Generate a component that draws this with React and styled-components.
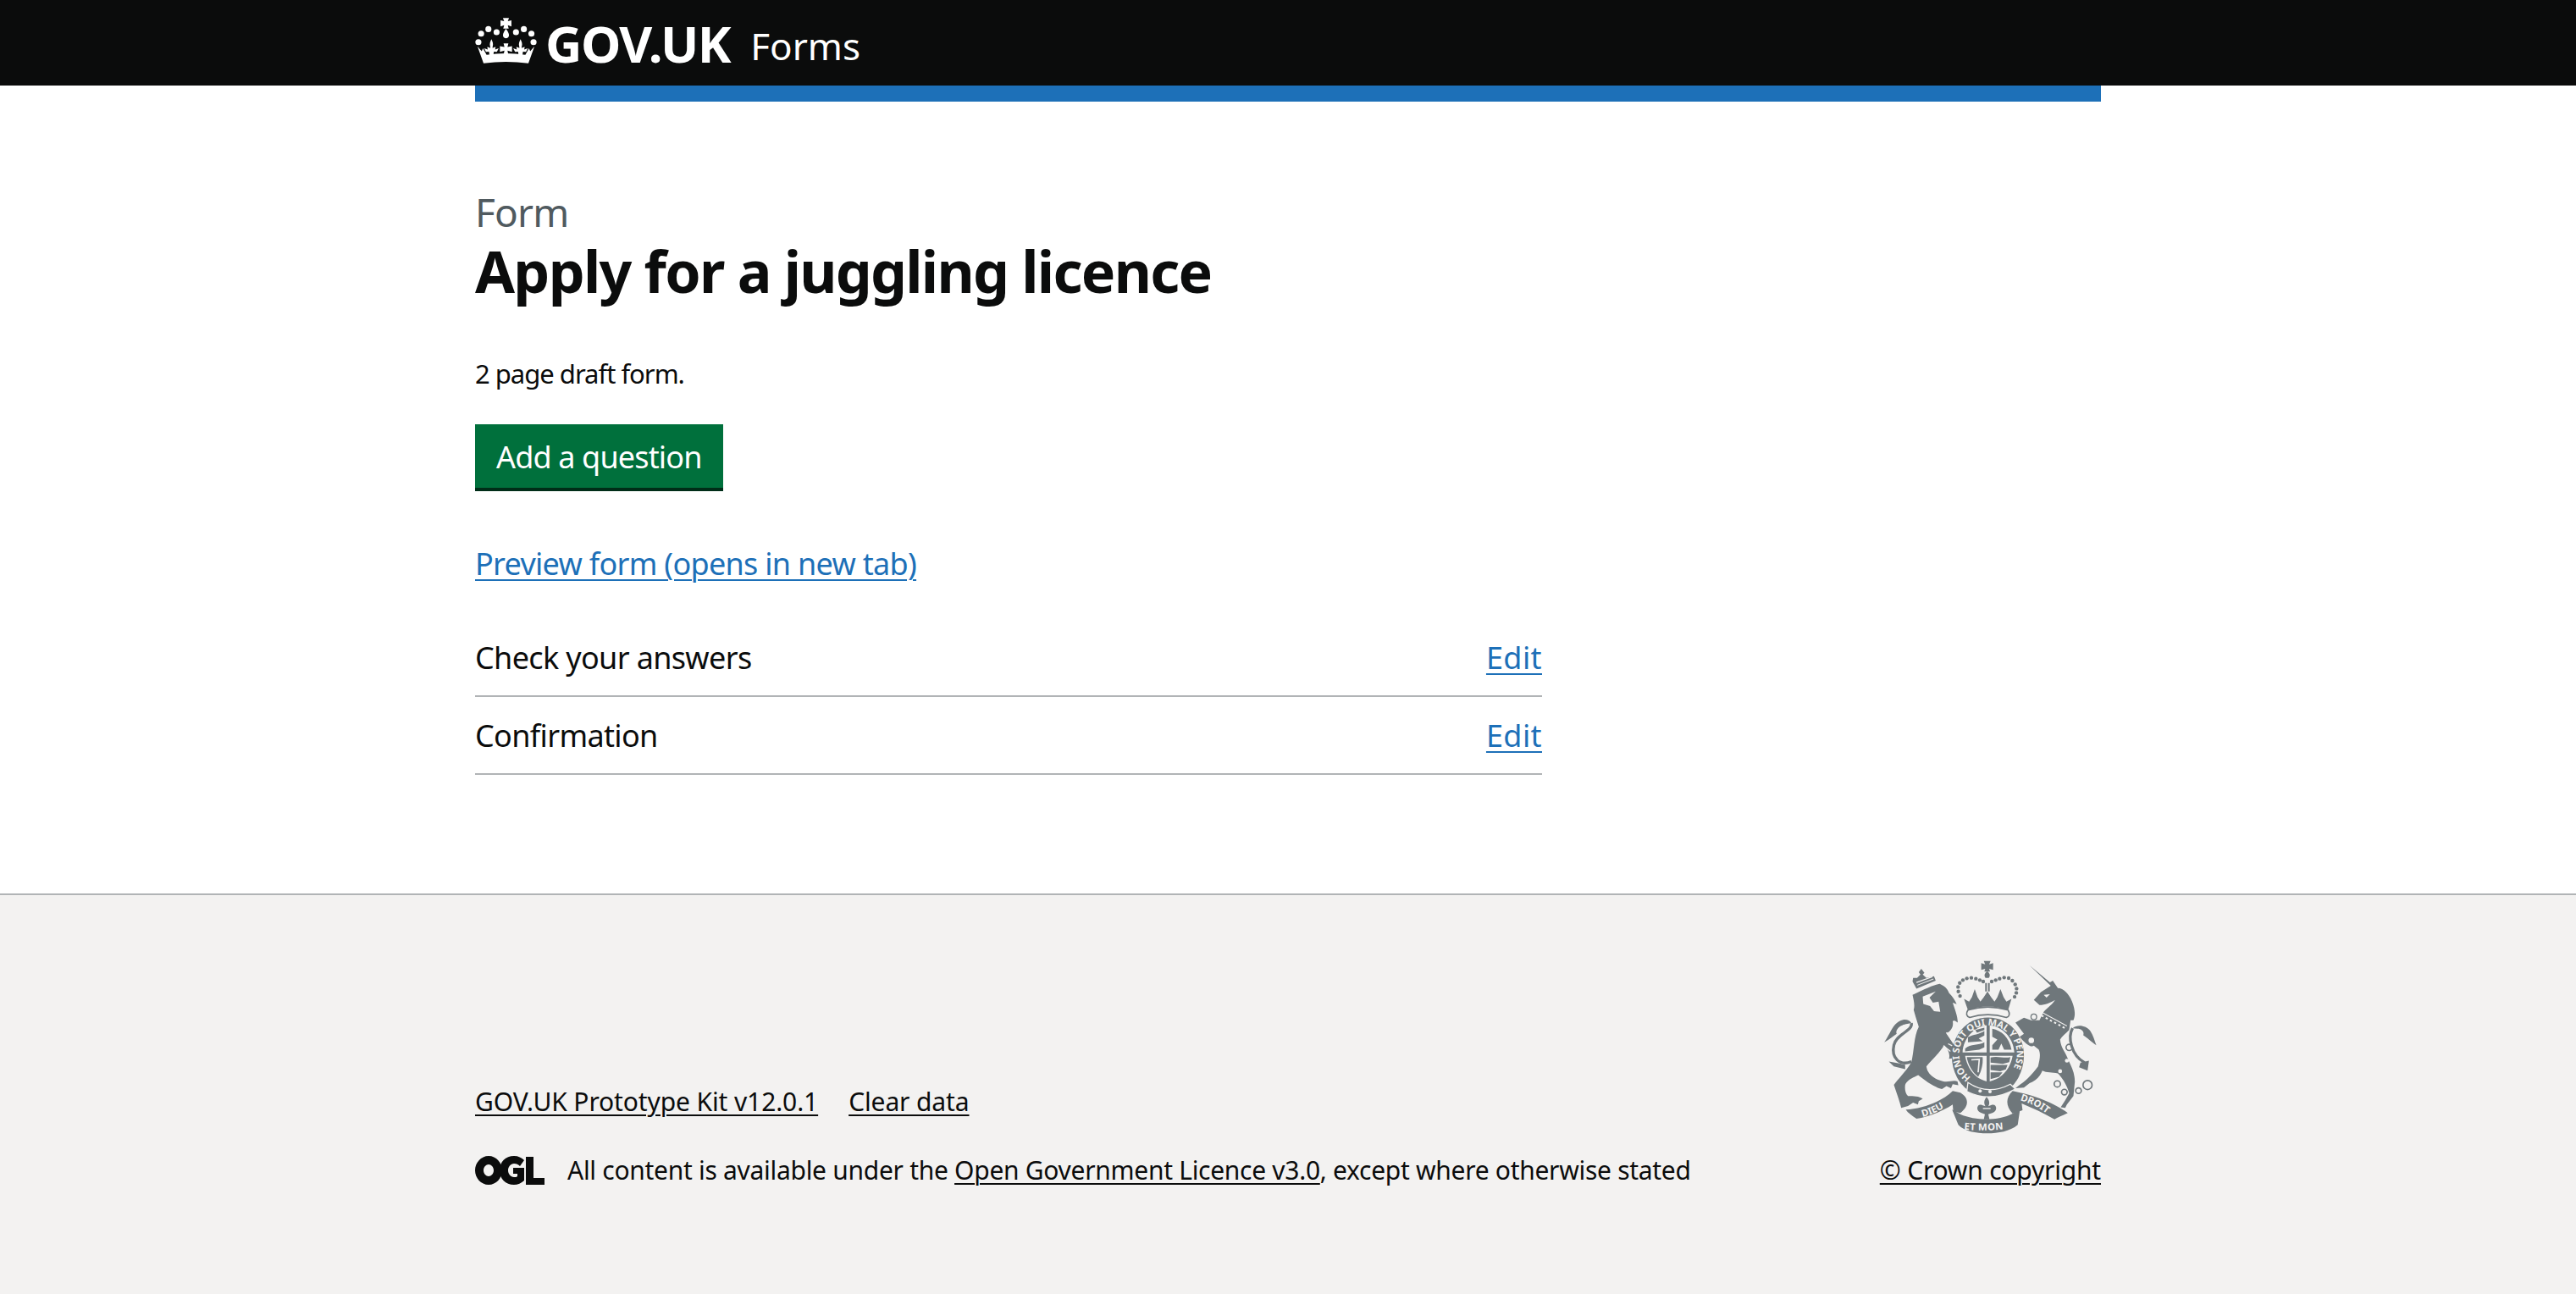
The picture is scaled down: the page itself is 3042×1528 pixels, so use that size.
import styled, { createGlobalStyle } from "styled-components";

const GlobalStyle = createGlobalStyle`
  html, body {
    margin: 0;
    padding: 0;
    background: #fff;
    color: #0b0c0c;
    font-family: "Noto Sans", "Liberation Sans", sans-serif;
  }
`;

const Page = styled.div`
  display: flex;
  flex-direction: column;
  min-height: 1528px;
`;

const Wrapper = styled.div`
  width: 1920px;
  margin: 0 auto;
`;

const Header = styled.header`
  background: #0b0c0c;
  height: 101px;
`;

const HeaderInner = styled(Wrapper)`
  display: flex;
  align-items: center;
  height: 101px;
  color: #fff;
`;

const Crown = styled.svg`
  width: 73px;
  height: 54px;
  margin: -6px 10px 0 0;
  fill: #fff;
`;

const Brand = styled.span`
  font-size: 60px;
  font-weight: 700;
  letter-spacing: -1.5px;
`;

const Service = styled.span`
  font-size: 44px;
  margin-left: 24px;
  margin-top: 6px;
`;

const BlueBar = styled(Wrapper)`
  height: 19px;
  background: #1d70b8;
`;

const Main = styled(Wrapper)`
  flex: 1;
  padding-top: 100px;
`;

const Caption = styled.div`
  font-size: 46px;
  line-height: 60px;
  color: #505a5f;
  letter-spacing: -0.8px;
`;

const Title = styled.h1`
  margin: 0;
  font-size: 68px;
  line-height: 80px;
  font-weight: 700;
  letter-spacing: -1.7px;
`;

const Intro = styled.p`
  margin: 60px 0 0;
  font-size: 31px;
  line-height: 42px;
  letter-spacing: -1px;
`;

const PrimaryButton = styled.button`
  display: block;
  margin: 39px 0 0;
  padding: 0 25px;
  height: 75px;
  border: 0;
  background: #00703c;
  box-shadow: 0 4px 0 #002d18;
  color: #fff;
  font-family: inherit;
  font-size: 36px;
  letter-spacing: -0.85px;
  line-height: 78px;
`;

const TextLink = styled.a`
  color: #1d70b8;
  font-size: 36px;
  text-decoration: underline;
  text-decoration-thickness: 2px;
  text-underline-offset: 5px;
  letter-spacing: -0.7px;
`;

const EditLink = styled(TextLink)`
  letter-spacing: 0.4px;
`;

const PreviewRow = styled.div`
  margin-top: 65px;
  line-height: 50px;
`;

const PageList = styled.ul`
  list-style: none;
  width: 1260px;
  margin: 33px 0 0;
  padding: 0;
`;

const PageRow = styled.li`
  display: flex;
  justify-content: space-between;
  align-items: center;
  height: 90px;
  border-bottom: 2px solid #b1b4b6;
  font-size: 36px;
  letter-spacing: -0.65px;
`;

const Footer = styled.footer`
  background: #f3f2f1;
  border-top: 2px solid #b1b4b6;
  height: 473px;
  box-sizing: border-box;
`;

const FooterInner = styled(Wrapper)`
  display: flex;
  justify-content: space-between;
  align-items: flex-end;
  padding-top: 77px;
`;

const FooterMeta = styled.div`
  font-size: 30px;
`;

const FooterLinks = styled.div`
  display: flex;
  gap: 36px;
  line-height: 42px;
  letter-spacing: -0.12px;
`;

const FooterLink = styled.a`
  color: #0b0c0c;
  text-decoration: underline;
  text-decoration-thickness: 2px;
  text-underline-offset: 4px;
`;

const Licence = styled.div`
  display: flex;
  align-items: center;
  margin-top: 39px;
  line-height: 42px;
  letter-spacing: -0.29px;
`;

const OglLogo = styled.svg`
  width: 82px;
  height: 34px;
  margin-right: 27px;
  fill: #0b0c0c;
`;

const CopyrightBlock = styled.div`
  display: flex;
  flex-direction: column;
  align-items: center;
  font-size: 30px;
  letter-spacing: -0.2px;
  line-height: 42px;
`;

const Crest = styled.svg`
  width: 254px;
  height: 207px;
  margin-bottom: 20px;
  fill: #6f777b;
`;

function Fleur({ x }) {
  return (
    <path
      transform={`translate(${x} 0)`}
      d="M-4 95C-7 86-4 78 0 70C4 78 7 86 4 95V100C8 96 14 96 14 96L12 104L24 100L18 112L8 111L6 126H-6L-8 111L-18 112L-24 100L-12 104L-14 96C-14 96-8 96-4 100Z"
    />
  );
}

function CrownIcon() {
  const dots = [[18, 52], [42, 37], [69, 47], [133, 47], [159, 37], [184, 52], [9, 80], [191, 80]];
  return (
    <Crown viewBox="-2 0 204 150" aria-hidden="true">
      {dots.map(([x, y]) => (
        <circle key={x} cx={x} cy={y} r="10" />
      ))}
      <path d="M90 0H110L106 11L118 8V28L106 24L109 35H91L94 24L82 28V8L94 11Z" />
      <path d="M100 36C107 46 112 54 109 62C105 69 95 69 91 62C88 54 93 46 100 36Z" />
      <Fleur x={52} />
      <Fleur x={148} />
      <path d="M92 84H108L105 96L120 93V112L105 108L108 122H92L95 108L80 112V93L95 96Z" />
      <path d="M6 94L20 110L24 100L36 122Q100 112 164 122L176 100L180 110L194 94L174 150Q100 140 26 150Z" />
    </Crown>
  );
}

function OglMark() {
  return (
    <OglLogo viewBox="0 0 82 34" aria-hidden="true">
      <path fillRule="evenodd" d="M16 0c9 0 16 8 16 17s-7 17-16 17S0 26 0 17 7 0 16 0zm0 10c-3 0-6 3-6 7s3 7 6 7 6-3 6-7-3-7-6-7z" />
      <path d="M46 0c5 0 9 2 12 5l-5 7c-2-2-4-3-7-3-4 0-7 4-7 8s3 8 7 8c2 0 3 0 4-1v-3h-5v-7h13v15c-3 3-8 5-12 5-10 0-17-7-17-17S36 0 46 0z" />
      <path d="M60 1h9v25h13v8H60z" />
    </OglLogo>
  );
}

function RoyalCrest() {
  const bg = "#f3f2f1";
  const ink = "#6f777b";
  const crownDots = [
    [344, 176], [338, 160], [337, 144], [343, 130], [354, 120], [368, 114], [384, 112], [400, 115], [414, 120], [426, 125],
    [456, 125], [470, 120], [484, 115], [500, 111], [516, 113], [529, 122], [539, 135], [544, 150], [543, 165], [537, 179],
  ];
  return (
    <Crest viewBox="70 50 760 620" aria-hidden="true">
      <defs>
        <path id="garter" d="M382 464A102 102 0 1 1 501 466" />
        <path id="scrollLeft" d="M212 604Q270 588 316 552" />
        <path id="scrollMid" d="M358 648Q440 656 526 644" />
        <path id="scrollRight" d="M556 545Q625 565 665 606" />
      </defs>

      {/* lion */}
      <path d="M176 172C205 160 240 140 272 133C288 140 300 150 305 165C318 178 326 190 332 205L318 200C326 225 335 245 336 270C325 262 322 262 318 265C322 285 312 300 296 308L318 340C330 360 342 385 338 403L322 396L305 398C310 380 300 362 288 350C270 380 240 405 225 425C228 450 250 470 285 478C305 482 320 472 335 478L338 492L318 488L312 502L296 495L280 505C250 498 225 478 196 456C175 466 155 475 150 490C148 505 150 520 160 530C180 530 200 530 212 540L198 548L195 560L178 553L160 565L136 572C130 545 118 515 110 490C125 470 155 440 172 410C182 370 180 320 198 285C190 260 184 240 180 225C185 210 180 190 176 172Z" />
      <path d="M172 408C130 425 100 395 110 350C118 310 178 300 172 272" fill="none" stroke={ink} strokeWidth="10" />
      <path d="M172 272C160 252 130 258 112 280C100 295 90 320 76 340C95 330 105 320 120 310C115 300 125 285 140 280C150 275 165 275 172 272Z" />
      <path d="M130 415L92 408L110 425L150 435L150 420Z" />
      <path d="M212 178L258 160L236 182L248 200L268 196L274 232L252 230L238 212L214 204Z" fill={bg} />
      <path d="M296 305L345 378" stroke={bg} strokeWidth="5" fill="none" />
      <path d="M302 345L316 352M285 352L310 372" stroke={bg} strokeWidth="4" fill="none" />
      <path d="M190 150L258 122L252 106L236 110L225 112L212 100L218 94L207 80L198 92L204 100L192 112L178 112L176 125Z" />
      <path d="M190 128L246 108" stroke={bg} strokeWidth="4" />
      <path d="M193 138L250 116" stroke={bg} strokeWidth="3" />

      {/* unicorn */}
      <path d="M590 68L662 128L672 122L690 148C710 148 730 170 740 195C752 225 752 245 745 262L735 262L730 296C718 308 704 318 698 330C700 360 718 375 728 405C740 430 750 450 750 480L745 530L722 560L716 572L700 570L716 545L730 520C722 490 705 465 690 450C670 445 650 448 635 440C628 460 610 478 590 484L570 500L540 502L558 488C580 475 605 445 620 425C626 400 630 380 622 365L605 352C595 360 575 345 555 320L570 310L540 270L570 253L595 262L625 262L640 232C655 215 672 205 680 190C665 200 645 208 625 208L605 190L630 162L665 140Z" />
      <path d="M742 290C725 320 735 385 785 412" fill="none" stroke={ink} strokeWidth="10" />
      <path d="M742 290C760 275 790 280 805 300C815 315 820 335 826 350C805 335 795 325 780 315C785 300 770 292 760 292Z" />
      <path d="M770 412L800 405L795 440L765 428Z" />
      <path d="M630 232L722 282" stroke={bg} strokeWidth="3" fill="none" />
      <path d="M632 245L715 290" stroke={bg} strokeWidth="6" strokeDasharray="8 9" fill="none" />
      <path d="M640 172L662 170L650 182Z" fill={bg} />
      <circle cx="722" cy="405" r="7" fill={bg} />
      <circle cx="698" cy="442" r="7" fill={bg} />
      <circle cx="605" cy="250" r="10" fill={bg} stroke={ink} strokeWidth="4" />
      <circle cx="596" cy="333" r="12" fill={bg} stroke={ink} strokeWidth="4" />
      <g fill="none" stroke={ink} strokeWidth="5">
        <circle cx="688" cy="487" r="11" />
        <circle cx="713" cy="516" r="10" />
        <circle cx="763" cy="511" r="10" />
        <circle cx="795" cy="491" r="16" />
        <circle cx="730" cy="358" r="11" />
      </g>

      {/* shield */}
      <path d="M443 252C520 252 572 318 570 390C568 462 520 532 443 532C365 532 315 462 315 390C315 318 365 252 443 252Z" />
      <path d="M353 376C355 326 395 284 438 280V376zM449 280C495 284 534 326 536 376H449zM362 388H438V478C400 470 370 435 362 388zM449 388H530C522 435 490 470 449 478Z" fill={bg} />
      <path d="M372 322C390 312 412 312 430 300V316L410 326L424 336L372 340zM362 362C382 344 410 352 430 340V358L412 366L362 372zM398 296L430 288V296L404 306Z" />
      <path d="M458 292C490 298 518 322 526 366H500L490 344L480 366H458V350L476 330L458 320Z" />
      <path d="M368 392L424 392C426 420 418 445 408 462C388 445 372 420 368 392Z" />
      <path d="M384 402L412 400L408 446" fill="none" stroke={bg} strokeWidth="5" />
      <path d="M452 394C475 386 500 398 522 392L518 410L495 416L452 412zM452 420L512 420L506 436L486 442L452 438zM452 446L494 446L482 462L452 470z" />
      <path d="M372 482C420 515 470 515 522 488L540 505C480 540 420 540 368 514Z" stroke={bg} strokeWidth="4" />
      <circle cx="415" cy="512" r="6" fill={bg} />
      <circle cx="450" cy="514" r="6" fill={bg} />
      <text fontFamily="'Noto Sans', sans-serif" fontSize="33" fontWeight="700" fill={bg}>
        <textPath href="#garter">HONI SOIT QUI MAL Y PENSE</textPath>
      </text>

      {/* royal crown */}
      <path d="M428 52H452L447 64L461 60V84L447 80L450 90H430L433 80L419 84V60L433 64Z" />
      <path d="M440 88C450 96 452 104 446 112H434C428 104 430 96 440 88Z" />
      <path d="M433 130H439V160H433zM443 130H449V160H443z" />
      {crownDots.map(([x, y]) => (
        <circle key={`${x}-${y}`} cx={x} cy={y} r="6.5" />
      ))}
      <path d="M358 186L376 196L386 180L396 152L406 180L416 196L428 180L441 160L454 180L466 196L476 180L487 152L498 180L508 196L526 186L514 226Q442 200 372 226Z" />
      <path d="M372 226Q442 204 514 226C522 240 518 250 508 252Q442 232 378 252C366 248 364 238 372 226Z" fill={bg} stroke={ink} strokeWidth="5" />

      {/* motto scroll */}
      <path d="M152 578C210 575 280 550 318 512L345 518C375 535 378 565 345 590L320 585L318 560C280 585 230 605 190 610C175 600 160 590 152 578Z" />
      <path d="M316 578L345 594C400 618 480 618 530 592L556 578L548 632C520 655 480 662 440 662C400 662 360 655 338 632Z" />
      <path d="M530 512C600 525 680 555 725 590C705 600 690 605 678 612C640 590 600 572 562 556L565 580L530 592C505 565 505 535 530 512Z" />
      <path d="M438 533C428 545 428 556 434 566L422 562C402 555 398 585 420 590L432 594L428 612H448L444 594L458 590C478 585 476 555 454 562L444 566C450 556 448 545 438 533Z" />
      <path d="M425 574L452 574" stroke={bg} strokeWidth="4" />
      <g fontFamily="'Noto Sans', sans-serif" fontSize="34" fontWeight="700" fill={bg}>
        <text><textPath href="#scrollLeft">DIEU</textPath></text>
        <text><textPath href="#scrollMid" letterSpacing="1">ET MON</textPath></text>
        <text><textPath href="#scrollRight">DROIT</textPath></text>
      </g>
    </Crest>
  );
}

export default function App() {
  return (
    <Page>
      <GlobalStyle />
      <Header>
        <HeaderInner>
          <CrownIcon />
          <Brand>GOV.UK</Brand>
          <Service>Forms</Service>
        </HeaderInner>
      </Header>
      <BlueBar />
      <Main>
        <Caption>Form</Caption>
        <Title>Apply for a juggling licence</Title>
        <Intro>2 page draft form.</Intro>
        <PrimaryButton>Add a question</PrimaryButton>
        <PreviewRow>
          <TextLink href="#">Preview form (opens in new tab)</TextLink>
        </PreviewRow>
        <PageList>
          <PageRow>
            Check your answers
            <EditLink href="#">Edit</EditLink>
          </PageRow>
          <PageRow>
            Confirmation
            <EditLink href="#">Edit</EditLink>
          </PageRow>
        </PageList>
      </Main>
      <Footer>
        <FooterInner>
          <FooterMeta>
            <FooterLinks>
              <FooterLink href="#">GOV.UK Prototype Kit v12.0.1</FooterLink>
              <FooterLink href="#">Clear data</FooterLink>
            </FooterLinks>
            <Licence>
              <OglMark />
              <span>
                All content is available under the{" "}
                <FooterLink href="#">Open Government Licence v3.0</FooterLink>, except where otherwise stated
              </span>
            </Licence>
          </FooterMeta>
          <CopyrightBlock>
            <RoyalCrest />
            <FooterLink href="#">© Crown copyright</FooterLink>
          </CopyrightBlock>
        </FooterInner>
      </Footer>
    </Page>
  );
}
